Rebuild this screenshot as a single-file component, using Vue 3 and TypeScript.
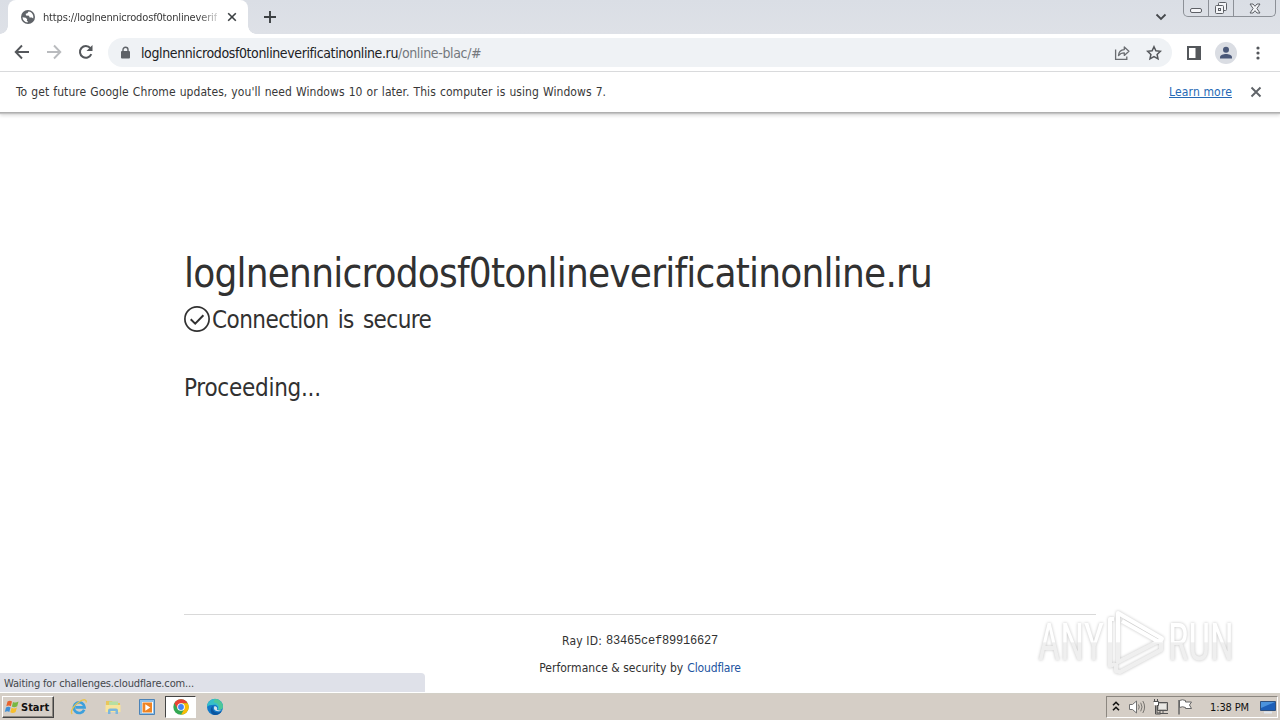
<script setup lang="ts">
const host = 'loglnennicrodosf0tonlineverificatinonline.ru'
const rayId = '83465cef89916627'
</script>

<template>
  <div class="screen">
    <header class="tabstrip">
      <div class="tab">
        <svg class="globe" width="16" height="16" viewBox="0 0 16 16"><circle cx="8" cy="8" r="7" fill="#5f6368" /><path d="M2.500 8.200l3.200.6 1.500 1.500-.4 1.500 1 .4-.2 1.300C4.700 13.200 2.600 11 2.500 8.200zM8.600 2.600L7.400 4.200l-1.700.5.3 1.700 3 .3.6 1.700 2.300.2 1.300 1c.8-3.500-1.200-6.400-4.600-7z" fill="#fff" /></svg>
        <span class="tab-title">https://loglnennicrodosf0tonlineverif</span>
        <svg class="tab-close" width="10" height="10" viewBox="0 0 10 10"><path d="M1.200 1.200l7.600 7.600M8.800 1.200L1.200 8.800" stroke="#3c4043" stroke-width="1.600" /></svg>
      </div>
      <svg class="plus" width="14" height="14" viewBox="0 0 14 14"><path d="M7 1v12M1 7h12" stroke="#3c4043" stroke-width="1.900" /></svg>
      <svg class="chevron" width="12" height="8" viewBox="0 0 12 8"><path d="M1.500 1.500L6 6l4.500-4.500" fill="none" stroke="#45484c" stroke-width="1.800" /></svg>
      <div class="winbuttons">
        <span class="win"><svg width="14" height="14" viewBox="0 0 14 14"><rect x="1.500" y="7.500" width="11" height="4" rx="1.500" fill="#f4f5f8" stroke="#5d6066" /></svg></span>
        <span class="win"><svg width="14" height="14" viewBox="0 0 14 14" fill="#f4f5f8" stroke="#5d6066"><rect x="4.500" y="1.500" width="8" height="8" rx="1" /><rect x="1.500" y="4.500" width="8" height="8" rx="1" /><rect x="4.500" y="7.500" width="2" height="2" /></svg></span>
        <span class="win last"><svg width="14" height="14" viewBox="0 0 14 14"><path d="M2 3h3l2 2.300L9 3h3L8.900 7.500 12 12H9L7 9.700 5 12H2l3.100-4.500z" fill="#f4f5f8" stroke="#5d6066" /></svg></span>
      </div>
    </header>

    <nav class="toolbar">
      <svg class="back" width="16" height="16" viewBox="0 0 16 16"><path d="M15 8H2M8 1.500L1.700 8 8 14.500" fill="none" stroke="#54575b" stroke-width="1.900" /></svg>
      <svg class="forward" width="16" height="16" viewBox="0 0 16 16"><path d="M1 8h13M8 1.500L14.300 8 8 14.500" fill="none" stroke="#b9bbbe" stroke-width="1.900" /></svg>
      <svg class="reload" width="16" height="16" viewBox="0 0 16 16"><path d="M13.300 10.200A5.900 5.900 0 1 1 12.400 4.100" fill="none" stroke="#54575b" stroke-width="2" /><path d="M14.500 1v6h-6z" fill="#54575b" /></svg>
      <div class="omnibox">
        <svg class="lock" width="10" height="14" viewBox="0 0 10 14"><rect x="1" y="5" width="9" height="7.500" rx="1" fill="#5f6368" /><path d="M3 5.500V3.700a2.500 2.500 0 0 1 5 0v1.800" fill="none" stroke="#5f6368" stroke-width="1.400" /></svg>
        <span class="url"><span class="url-host">{{ host }}</span><span class="url-path">/online-blac/#</span></span>
        <svg class="share" width="16" height="16" viewBox="0 0 16 16" fill="none" stroke="#6a6d71" stroke-width="1.300"><path d="M1.600 4.500v9.900h11.200v-3" /><path d="M4.500 10.500c.3-3.800 2.300-5.700 5.800-5.900V2l4.600 4.200-4.600 4.200V7.800C7.600 7.800 6 8.600 4.500 10.500z" stroke-linejoin="round" /></svg>
        <svg class="star" width="16" height="16" viewBox="0 0 16 16"><path d="M8 1.700l1.900 4.100 4.500.5-3.300 3.100.9 4.400L8 11.600l-4 2.200.9-4.400L1.600 6.300l4.500-.5z" fill="none" stroke="#54575b" stroke-width="1.500" /></svg>
      </div>
      <svg class="panel" width="14" height="14" viewBox="0 0 14 14"><path d="M0 0h14v14H0zM2 2v10h6.500V2z" fill="#54575b" fill-rule="evenodd" /></svg>
      <svg class="avatar" width="22" height="22" viewBox="0 0 22 22"><circle cx="11" cy="11" r="11" fill="#dadde3" /><circle cx="11" cy="7.800" r="3" fill="#4a5878" /><path d="M5 16.500v-1.300c0-2.100 3.500-3.200 6-3.200s6 1.100 6 3.200v1.300z" fill="#4a5878" /></svg>
      <svg class="dots" width="4" height="14" viewBox="0 0 4 14" fill="#54575b"><circle cx="2" cy="2" r="1.600" /><circle cx="2" cy="7" r="1.600" /><circle cx="2" cy="12" r="1.600" /></svg>
    </nav>

    <section class="notice">
      <span class="notice-text">To get future Google Chrome updates, you'll need Windows 10 or later. This computer is using Windows 7.</span>
      <a class="learn">Learn more</a>
      <svg width="12" height="12" viewBox="0 0 12 12"><path d="M1.500 1.500l9 9M10.500 1.500l-9 9" stroke="#5f6368" stroke-width="1.900" /></svg>
    </section>

    <main class="page">
      <h1>{{ host }}</h1>
      <div class="secure">
        <svg width="26" height="26" viewBox="0 0 26 26" fill="none" stroke="#313131"><circle cx="13" cy="13" r="12.100" stroke-width="1.700" /><path d="M6.700 13.200l4.500 4.400 8.200-8.400" stroke-width="2" /></svg>
        <h2 class="secure-text">Connection is secure</h2>
      </div>
      <h2 class="proceed">Proceeding...</h2>
      <footer class="foot">
        <div class="foot-row"><span class="ray-label">Ray ID:</span><code class="ray">{{ rayId }}</code></div>
        <div class="foot-row"><span class="perf">Performance &amp; security by</span><a class="cf">Cloudflare</a></div>
      </footer>
      <div class="status">Waiting for challenges.cloudflare.com...</div>
      <svg class="watermark" width="240" height="76" viewBox="0 0 240 76">
        <defs><linearGradient id="wm" x1="0" y1="0" x2="0" y2="76" gradientUnits="userSpaceOnUse"><stop offset="0.500" stop-color="#fff" /><stop offset="0.510" stop-color="#efefef" /></linearGradient></defs>
        <g fill="url(#wm)">
          <text x="8" y="56" font-size="51" textLength="66" lengthAdjust="spacingAndGlyphs">ANY</text>
          <text x="138" y="56" font-size="51" textLength="66" lengthAdjust="spacingAndGlyphs">RUN</text>
          <g fill="none" stroke="url(#wm)" stroke-width="4" stroke-linejoin="round"><path d="M88 49V9l44 25.500-2 4L92 17" /><path d="M84 15h-4v47l5-2M88 49v9l43-22" /><path d="M86 59v8l4 1 41-22v-8" /></g>
        </g>
      </svg>
    </main>

    <div class="taskbar">
      <button class="start">
        <svg width="16" height="16" viewBox="0 0 16 16"><path d="M3.500 2.500q2.500-1.500 4.500 0L6.800 7.300q-2-1.400-4.500 0z" fill="#e8632c" /><path d="M9 3q2.500 1.400 5.500-.4L13.200 7.300q-3 1.600-5.300.3z" fill="#78b843" /><path d="M2 8.400q2.500-1.500 4.500 0L5.300 13q-2-1.400-4.500 0z" fill="#3f8fd6" /><path d="M7.600 8.800q2.500 1.400 5.300-.3L11.600 13q-2.800 1.700-5.300.3z" fill="#f7bf2d" /></svg>
        <span>Start</span>
      </button>
      <span class="app ie"><svg width="18" height="18" viewBox="0 0 18 18" fill="none"><path d="M14.200 11.700A5.400 5.400 0 1 1 14.600 9.400H5.500" stroke="#3da0dc" stroke-width="2.600" /><path d="M2.200 16C-.5 13.500 4.500 6.500 10 3.200c4-2.300 7-1.800 6 1.300" stroke="#e9c34a" stroke-width="1.300" /></svg></span>
      <span class="app"><svg width="18" height="18" viewBox="0 0 18 18"><path d="M2 3h6l1 2h7v9H2z" fill="#e9c65b" /><path d="M5 3.500h9V9H5z" fill="#b7dfa2" /><path d="M1.500 7h15v7h-15z" fill="#f8e49b" /><path d="M4 16v-3.500q0-2 2-2h6q2 0 2 2V16h-2.500v-3h-5v3z" fill="#7cb7dd" /></svg></span>
      <span class="app"><svg width="18" height="18" viewBox="0 0 18 18"><path d="M1.500 1.500h15v15h-15z" fill="#8fc0e8" stroke="#4c83b7" /><path d="M4 4h11v11H4z" fill="#fff" /><path d="M4.500 4.500h9.500v10H4.500z" fill="#ee8424" /><path d="M7.300 6.200v6.600l5-3.300z" fill="#fff" /></svg></span>
      <span class="app active"><svg width="16" height="16" viewBox="0 0 16 16"><circle cx="8" cy="8" r="7.700" fill="#34a853" /><path d="M1.330 4.150A7.700 7.700 0 0 1 14.670 4.150H8L4.700 9.900z" fill="#ea4335" /><path d="M14.670 4.150A7.700 7.700 0 0 1 8 15.700L11.300 9.900 8 4.150z" fill="#fbbc05" /><circle cx="8" cy="8" r="3.850" fill="#fff" /><circle cx="8" cy="8" r="2.900" fill="#4285f4" /></svg></span>
      <span class="app edge"><svg width="18" height="18" viewBox="0 0 18 18"><circle cx="9" cy="9" r="8" fill="#1379c8" /><path d="M1 9a8 8 0 0 1 16-.5c.2 3.200-3.500 4.100-5.600 3 1.500-2-.2-4.700-3-4.700C5 6.800 1.800 7.500 1 9z" fill="#36bfc9" /><path d="M9 1a8 8 0 0 1 8 7.500c.1 2.600-2.500 3.500-4.500 3.300 1.500-2.500.5-7-5-7.600z" fill="#5acb80" opacity=".65" /><path d="M7.600 7.500c-2.400 2.300-.5 6.800 3.700 7 2 .1 3.500-.6 4.600-1.500C14 16.500 10.500 17.500 7.500 16.800 3.800 15 3.800 9.500 7.600 7.500z" fill="#0b559f" /><path d="M8.600 8c2 .2 3.200 1.800 2.300 3.500.9.900 3 1.100 4.600.7-2 1.800-7.200 1.400-7.700-2.100z" fill="#d6e4ea" /></svg></span>
      <div class="tray">
        <svg width="8" height="12" viewBox="0 0 8 12"><path d="M1 4.300l3-3 3 3M1 9.300l3-3 3 3" fill="none" stroke="#111" stroke-width="1.600" /></svg>
        <svg class="speaker" width="18" height="16" viewBox="0 0 18 16"><path d="M1.500 5.500h3L8.500 2v12l-4-3.500h-3z" fill="#fff" stroke="#707070" /><path d="M10.500 5.500q1.500 2.500 0 5M12.700 3.700q2.700 4.300 0 8.600M14.800 2q3.600 6 0 12" fill="none" stroke="#77746f" /></svg>
        <svg class="net" width="18" height="16" viewBox="0 0 18 16"><path d="M5.500 3.500h10v8h-10z" fill="#bbb9b4" stroke="#555" /><path d="M7 5h7v5H7z" fill="#e9e8e4" /><path d="M8 14.500h8M11 12v2" stroke="#555" /><path d="M1.500 2.500h5v4h-1.500v7.500h3v-2.500M2.500 0v3M5.500 0v3M3.500 6.500V15h5" fill="none" stroke="#4e4e4e" /><path d="M2 3h4v3H2z" fill="#fff" /></svg>
        <svg class="flag" width="16" height="16" viewBox="0 0 16 16"><path d="M2.500 1.500q3-1.500 6 0v1.500h6l-2 3 2 3.500h-6V8.500q-3-1.500-6 0z" fill="#fff" stroke="#666" /><path d="M2 1v14.500" stroke="#666" stroke-width="1.500" /></svg>
        <span class="clock">1:38 PM</span>
        <svg class="monitor" width="16" height="14" viewBox="0 0 16 14"><path d="M.5 1.500h15v9H.5z" fill="#1d5fb8" stroke="#30527f" /><path d="M1 2h14L1 8z" fill="#4b93dd" /><path d="M4 12.500h8" stroke="#dfe6ee" stroke-width="2" /></svg>
      </div>
    </div>
  </div>
</template>

<style>
body { margin: 0; overflow: hidden; }
</style>
<style scoped>
.screen { width: 1280px; height: 720px; overflow: hidden; display: flex; flex-direction: column; font: 12px "DejaVu Sans Condensed", "DejaVu Sans", sans-serif; font-stretch: condensed; background: #fff; color: #383838; white-space: nowrap; }
svg { display: block; flex: none; }
.tabstrip { height: 34px; flex: none; display: flex; align-items: center; background: linear-gradient(#dadee5, #dee1e7); padding: 0 4px 0 8px; }
.tab { box-sizing: border-box; position: relative; width: 240px; height: 34px; background: #fff; border-radius: 8px 8px 0 0; display: flex; align-items: center; padding: 0 11px 0 12px; }
.tab::before, .tab::after { content: ""; position: absolute; bottom: 0; width: 8px; height: 8px; }
.tab::before { left: -8px; background: radial-gradient(circle at 0 0, transparent 7.500px, #fff 8px); }
.tab::after { right: -8px; background: radial-gradient(circle at 100% 0, transparent 7.500px, #fff 8px); }
.tab-title { flex: none; width: 174px; overflow: hidden; margin-left: 7px; font-size: 11px; letter-spacing: -0.159px; mask-image: linear-gradient(90deg, #000 155px, rgba(0, 0, 0, 0.25) 174px); }
.tab-close { margin-left: auto; }
.plus { margin-left: 15px; }
.chevron { margin-left: auto; }
.winbuttons { align-self: flex-start; box-sizing: border-box; display: flex; width: 93px; height: 17px; margin-left: 16px; border: 1px solid #8c9097; border-top: 0; border-radius: 0 0 5px 5px; }
.win { box-sizing: border-box; width: 25px; display: flex; align-items: center; justify-content: center; border-right: 1px solid #8c9097; }
.last { flex: 1; border-right: 0; }
.toolbar { height: 37px; flex: none; display: flex; align-items: center; padding: 0 20px 0 14px; border-bottom: 1px solid #d9dadc; }
.back, .forward, .reload { margin-top: -1px; }
.forward, .reload { margin-left: 16px; }
.omnibox { box-sizing: border-box; width: 1064px; height: 29px; margin-left: 14px; border-radius: 15px; background: #eff2f5; display: flex; align-items: center; padding: 0 10px 0 12px; }
.url { margin-left: 11px; font-size: 14px; }
.url-host { color: #202124; letter-spacing: -0.385px; }
.url-path { color: #74787d; letter-spacing: -0.350px; }
.share { margin-left: auto; }
.star { margin-left: 16px; }
.panel { margin-left: 15px; }
.avatar { margin-left: 14px; }
.dots { margin-left: auto; }
.notice { position: relative; height: 40px; flex: none; display: flex; align-items: center; padding: 0 18px 0 16px; border-bottom: 1px solid #b0b0b0; box-shadow: 0 1px 1px #c4c4c4, 0 3px 3px #e2e2e2; }
.notice-text { letter-spacing: 0.070px; word-spacing: 0.550px; }
.learn { margin-left: auto; margin-right: 18px; color: #2569b5; text-decoration: underline; letter-spacing: 0.150px; }
.page { position: relative; flex: 1; display: flex; flex-direction: column; padding: 132px 184px 0; color: #313131; }
h1, h2 { margin: 0; font-weight: 400; }
h1 { font-size: 40px; line-height: 56px; letter-spacing: -0.785px; }
h2 { font-size: 24px; line-height: 36px; }
.secure { display: flex; align-items: center; gap: 2px; height: 36px; }
.secure-text { padding-top: 2px; letter-spacing: -0.560px; word-spacing: 2.800px; }
.proceed { margin-top: 33px; letter-spacing: -0.270px; }
.foot { margin-top: 208px; border-top: 1px solid #d9d9d9; padding-top: 12px; }
.foot-row { display: flex; justify-content: center; align-items: center; gap: 4px; height: 27px; }
.ray-label { letter-spacing: 0.170px; }
.ray { font: 12px "Liberation Mono", monospace; letter-spacing: -0.200px; }
.perf { letter-spacing: 0.030px; }
.cf { color: #1c54a0; letter-spacing: -0.150px; }
.status { position: absolute; left: 0; bottom: 1px; box-sizing: border-box; width: 425px; height: 19px; line-height: 21px; padding-left: 4px; background: #dfe1e9; border-radius: 0 4px 0 0; font-size: 11px; letter-spacing: -0.150px; color: #44474b; }
.watermark { position: absolute; left: 1030px; bottom: 13px; font-family: Roboto, sans-serif; font-weight: 400; filter: drop-shadow(0 0 1.500px rgba(0, 0, 0, 0.240)); }
.taskbar { height: 26px; flex: none; display: flex; align-items: center; padding: 0 2px; background: #d5cec6; border-top: 1px solid #d3d0c7; color: #111; }
.start { box-sizing: border-box; width: 52px; height: 22px; display: flex; align-items: center; gap: 1px; padding: 0 0 0 1px; background: #d5cec6; border: 1px solid; border-color: #fff #444 #444 #fff; box-shadow: inset -1px -1px #8c8780; font: inherit; font-size: 11px; font-weight: 700; color: #111; }
.app { width: 34px; height: 22px; display: flex; align-items: center; justify-content: center; }
.ie { margin-left: 8px; }
.active { box-sizing: border-box; width: 31px; margin-left: 1px; background: #fff; border: 1px solid; border-color: #444 #fff #fff #444; }
.edge { margin-left: 2px; }
.tray { box-sizing: border-box; width: 172px; height: 22px; margin-left: auto; display: flex; align-items: center; border: 1px solid; border-color: #8c8780 #fff #fff #8c8780; padding-left: 5px; }
.speaker { margin-left: 8px; }
.net { margin-left: 6px; }
.flag { margin-left: 7px; }
.clock { margin-left: 17px; font-size: 11px; letter-spacing: -0.125px; }
.monitor { margin-left: auto; margin-right: 1px; }
</style>
